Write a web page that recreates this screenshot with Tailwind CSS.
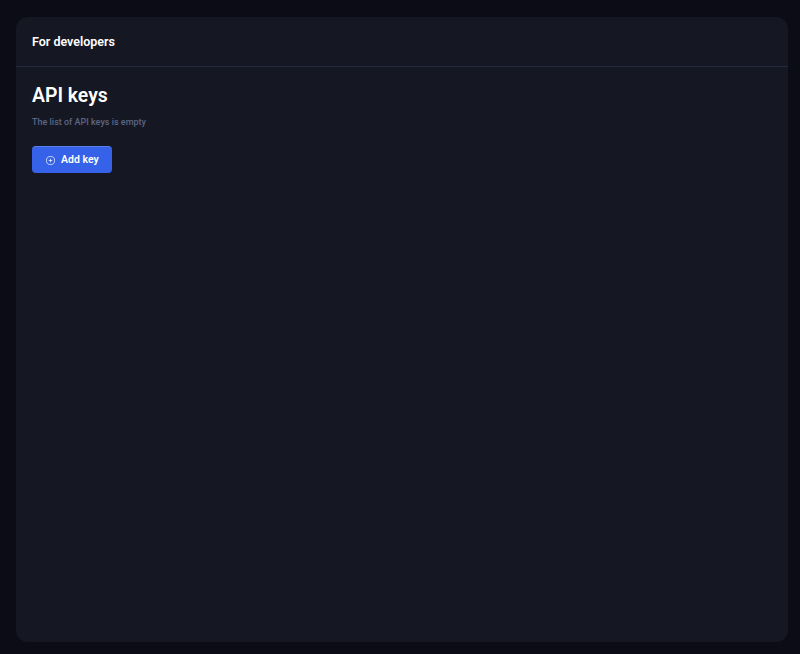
<!DOCTYPE html>
<html lang="en">
<head>
    <meta charset="UTF-8">
    <meta name="viewport" content="width=device-width, initial-scale=1.0">
    <title>For developers</title>
    <script src="https://cdn.jsdelivr.net/npm/@tailwindcss/browser@4"></script>
</head>
<body class="bg-[#0c0c16] h-[654px] overflow-hidden font-['Roboto',sans-serif]">
    <div class="pt-[17px] pl-4 pr-3 pb-3 h-full">
        <div class="h-full rounded-xl bg-[#151823]">
            <header class="h-[50px] flex items-center px-4 pt-px border-b border-[#262a40]">
                <h2 class="text-[12.5px] font-semibold text-white">For developers</h2>
            </header>
            <main class="px-4 pt-4">
                <h1 class="text-[19.4px] leading-[26px] font-semibold text-white">API keys</h1>
                <p class="mt-[6px] text-[9px] leading-[14px] font-medium text-[#5d6582]">The list of API keys is empty</p>
                <button class="mt-[17px] flex items-center gap-[6px] h-[27px] w-20 pl-[14px] rounded-[4px] bg-[#3562e8] border-t border-[#5a80f0] text-white text-[10.5px] font-semibold">
                    <svg class="w-[9px] h-[9px]" viewBox="0 0 10 10" fill="none" stroke="currentColor" stroke-width="0.8">
                        <circle cx="5" cy="5" r="4.5"/>
                        <path d="M5 3v4M3 5h4"/>
                    </svg>
                    Add key
                </button>
            </main>
        </div>
    </div>
</body>
</html>
